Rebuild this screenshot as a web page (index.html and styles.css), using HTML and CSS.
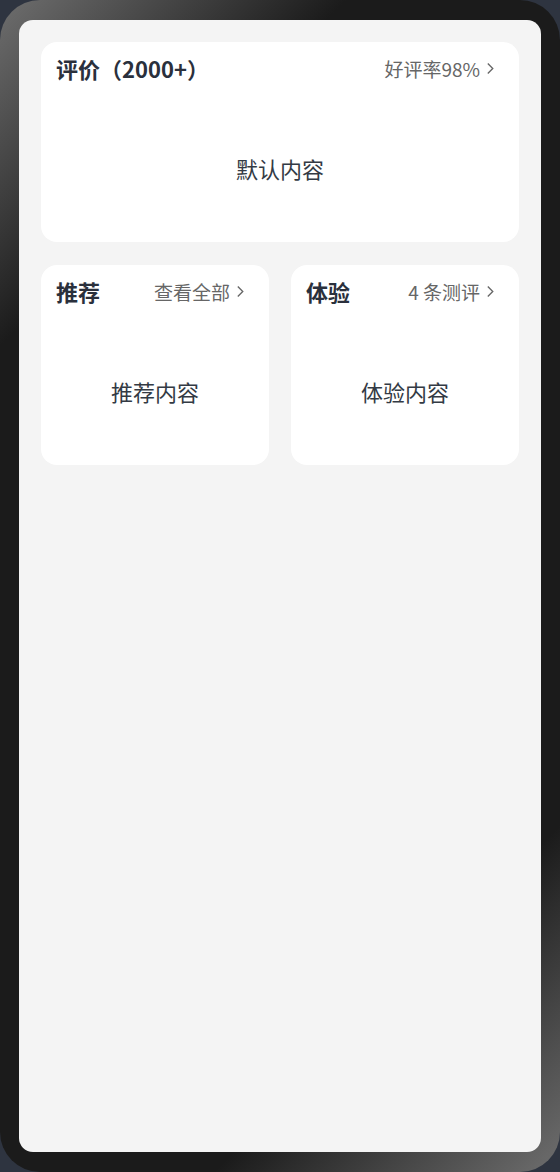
FILE: index.html
```html
<!DOCTYPE html>
<html lang="zh-CN">
<head>
    <meta charset="UTF-8">
    <meta name="viewport" content="width=device-width, initial-scale=1.0">
    <title>卡片</title>
    <link rel="stylesheet" href="styles.css">
</head>
<body>

    <div class="phone">
        <div class="screen">

            <section class="card">
                <div class="card-head">
                    <h2 class="card-title">评价（2000+）</h2>
                    <a class="card-more" href="#">好评率98%
                        <svg class="chevron" viewBox="0 0 10 14" width="9" height="13"><path d="M2 1.5 L7.5 7 L2 12.5" /></svg>
                    </a>
                </div>
                <div class="card-body">默认内容</div>
            </section>

            <div class="card-row">
                <section class="card">
                    <div class="card-head">
                        <h2 class="card-title">推荐</h2>
                        <a class="card-more" href="#">查看全部
                            <svg class="chevron" viewBox="0 0 10 14" width="9" height="13"><path d="M2 1.5 L7.5 7 L2 12.5" /></svg>
                        </a>
                    </div>
                    <div class="card-body">推荐内容</div>
                </section>
                <section class="card">
                    <div class="card-head">
                        <h2 class="card-title">体验</h2>
                        <a class="card-more" href="#">4 条测评
                            <svg class="chevron" viewBox="0 0 10 14" width="9" height="13"><path d="M2 1.5 L7.5 7 L2 12.5" /></svg>
                        </a>
                    </div>
                    <div class="card-body">体验内容</div>
                </section>
            </div>

        </div>
    </div>

</body>
</html>
```

FILE: styles.css
```css
html, body {
    margin: 0;
    height: 100%;
}
body {
    font-family: "Noto Sans CJK SC", "Noto Sans", sans-serif;
    background-color: #2e3440;
}
.phone {
    box-sizing: border-box;
    height: 100%;
    padding: 20px 19px;
    border-radius: 40px;
    background: linear-gradient(135deg, #6e6e6e 0%, #1b1b1b 20%, #1b1b1b 80%, #6e6e6e 100%);
}
.screen {
    box-sizing: border-box;
    height: 100%;
    padding: 22px;
    border-radius: 14px;
    background-color: #f4f4f4;
    display: flex;
    flex-direction: column;
    gap: 23px;
}
.card {
    background-color: #fff;
    border-radius: 16px;
}
.card-row {
    display: grid;
    grid-template-columns: 1fr 1fr;
    gap: 22px;
}
.card-head {
    box-sizing: border-box;
    height: 56px;
    padding: 0 24px 4px 15px;
    display: flex;
    align-items: center;
    justify-content: space-between;
}
.card-title {
    margin: 0;
    font-size: 22px;
    font-weight: bold;
    color: #2a303c;
}
.card-more {
    display: flex;
    align-items: center;
    gap: 6px;
    font-size: 19px;
    color: #666;
    text-decoration: none;
}
.chevron {
    fill: none;
    stroke: #666;
    stroke-width: 1.5;
}
.card-body {
    box-sizing: border-box;
    height: 144px;
    padding-bottom: 4px;
    display: flex;
    align-items: center;
    justify-content: center;
    font-size: 22px;
    color: #333a44;
}
```
